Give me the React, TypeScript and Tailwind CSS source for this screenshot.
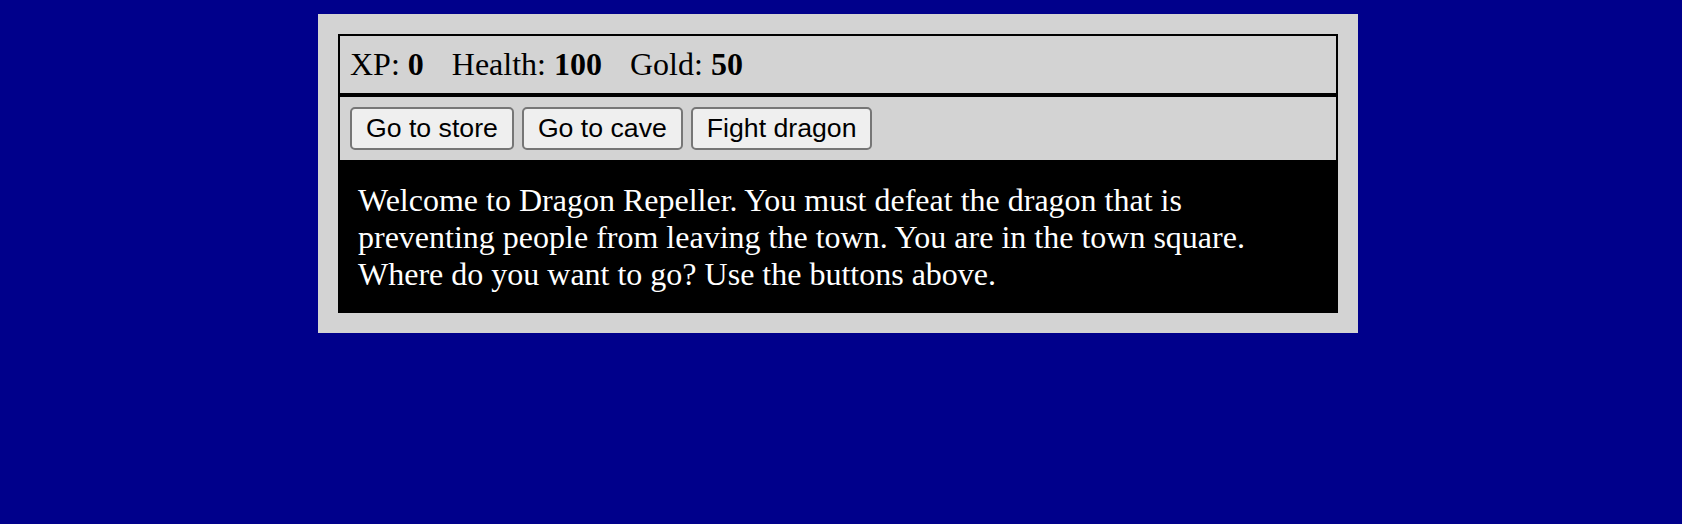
import React from "react";

export default function App() {
  return (
    <div className="min-h-screen w-full bg-[#00008b] pt-[14px]">
      <div
        className="ml-[318px] w-[1040px] bg-[#d3d3d3] p-[20px] text-[32px] text-white"
        style={{ fontFamily: '"Liberation Serif", "Times New Roman", serif' }}
      >
        <div className="border-2 border-black px-[10px] py-[10px] leading-[37px] text-black">
          <span className="pr-[20px]">
            XP: <strong>0</strong>
          </span>{" "}
          <span className="pr-[20px]">
            Health: <strong>100</strong>
          </span>{" "}
          <span className="pr-[20px]">
            Gold: <strong>50</strong>
          </span>
        </div>
        <div className="flex gap-[8px] border-2 border-black p-[10px]">
          {["Go to store", "Go to cave", "Fight dragon"].map((label) => (
            <button
              key={label}
              className="flex h-[43px] items-center rounded-[5px] border-2 border-[#767676] bg-[#efefef] px-[14px] text-[26.67px] leading-none text-black"
              style={{ fontFamily: '"Liberation Sans", Arial, sans-serif' }}
            >
              {label}
            </button>
          ))}
        </div>
        <div className="bg-black p-[20px] leading-[37px] text-white">
          Welcome to Dragon Repeller. You must defeat the dragon that is
          preventing people from leaving the town. You are in the town square.
          Where do you want to go? Use the buttons above.
        </div>
      </div>
    </div>
  );
}
